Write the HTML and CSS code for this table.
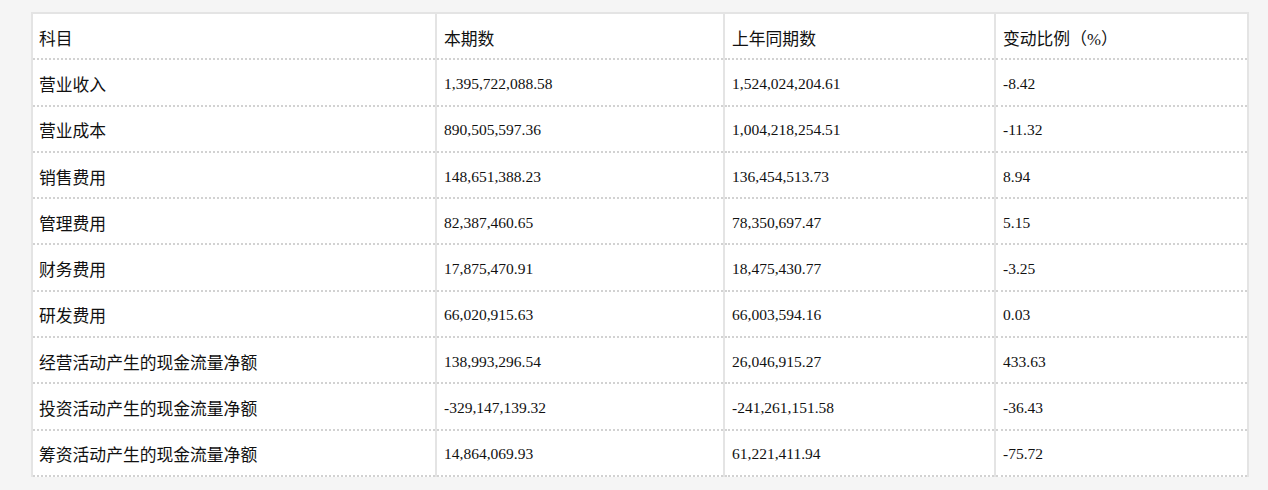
FILE: index.html
```html
<!DOCTYPE html>
<html lang="zh-CN">
<head>
<meta charset="utf-8">
<title>财务数据变动</title>
<link rel="stylesheet" href="styles.css">
</head>
<body>
<div class="page">
<table class="fin">
  <colgroup>
    <col class="c1"><col class="c2"><col class="c3"><col class="c4">
  </colgroup>
  <thead>
    <tr><th class="cn">科目</th><th class="cn">本期数</th><th class="cn">上年同期数</th><th class="cn">变动比例（%）</th></tr>
  </thead>
  <tbody>
    <tr><td class="cn">营业收入</td><td>1,395,722,088.58</td><td>1,524,024,204.61</td><td>-8.42</td></tr>
    <tr><td class="cn">营业成本</td><td>890,505,597.36</td><td>1,004,218,254.51</td><td>-11.32</td></tr>
    <tr><td class="cn">销售费用</td><td>148,651,388.23</td><td>136,454,513.73</td><td>8.94</td></tr>
    <tr><td class="cn">管理费用</td><td>82,387,460.65</td><td>78,350,697.47</td><td>5.15</td></tr>
    <tr><td class="cn">财务费用</td><td>17,875,470.91</td><td>18,475,430.77</td><td>-3.25</td></tr>
    <tr><td class="cn">研发费用</td><td>66,020,915.63</td><td>66,003,594.16</td><td>0.03</td></tr>
    <tr><td class="cn">经营活动产生的现金流量净额</td><td>138,993,296.54</td><td>26,046,915.27</td><td>433.63</td></tr>
    <tr><td class="cn">投资活动产生的现金流量净额</td><td>-329,147,139.32</td><td>-241,261,151.58</td><td>-36.43</td></tr>
    <tr><td class="cn">筹资活动产生的现金流量净额</td><td>14,864,069.93</td><td>61,221,411.94</td><td>-75.72</td></tr>
  </tbody>
</table>
</div>
</body>
</html>
```
FILE: styles.css
```css
html, body {
  margin: 0;
  padding: 0;
  background: #f5f5f5;
}
.page {
  padding: 12px 0 0 31px;
}
.fin {
  width: 1216px;
  border-collapse: collapse;
  table-layout: fixed;
  background: #ffffff;
  font-family: "Liberation Serif", "Noto Sans CJK SC", serif;
  font-size: 15.5px;
  color: #111111;
  border-top: 2px solid #e4e4e4;
  border-left: 2px solid #e4e4e4;
  border-right: 2px solid #e4e4e4;
}
.c1 { width: 404px; }
.c2 { width: 288px; }
.c3 { width: 271px; }
.c4 { width: 253px; }
.fin th, .fin td {
  height: 41.3px;
  padding: 3px 7px 0 7px;
  text-align: left;
  font-weight: normal;
  vertical-align: middle;
  border-left: 2px solid #e4e4e4;
  border-bottom: 2px dotted #d2d2d2;
  white-space: nowrap;
}
.fin th:first-child, .fin td:first-child {
  border-left: none;
  padding-left: 6px;
}
.fin .cn {
  font-size: 16.8px;
}
```
